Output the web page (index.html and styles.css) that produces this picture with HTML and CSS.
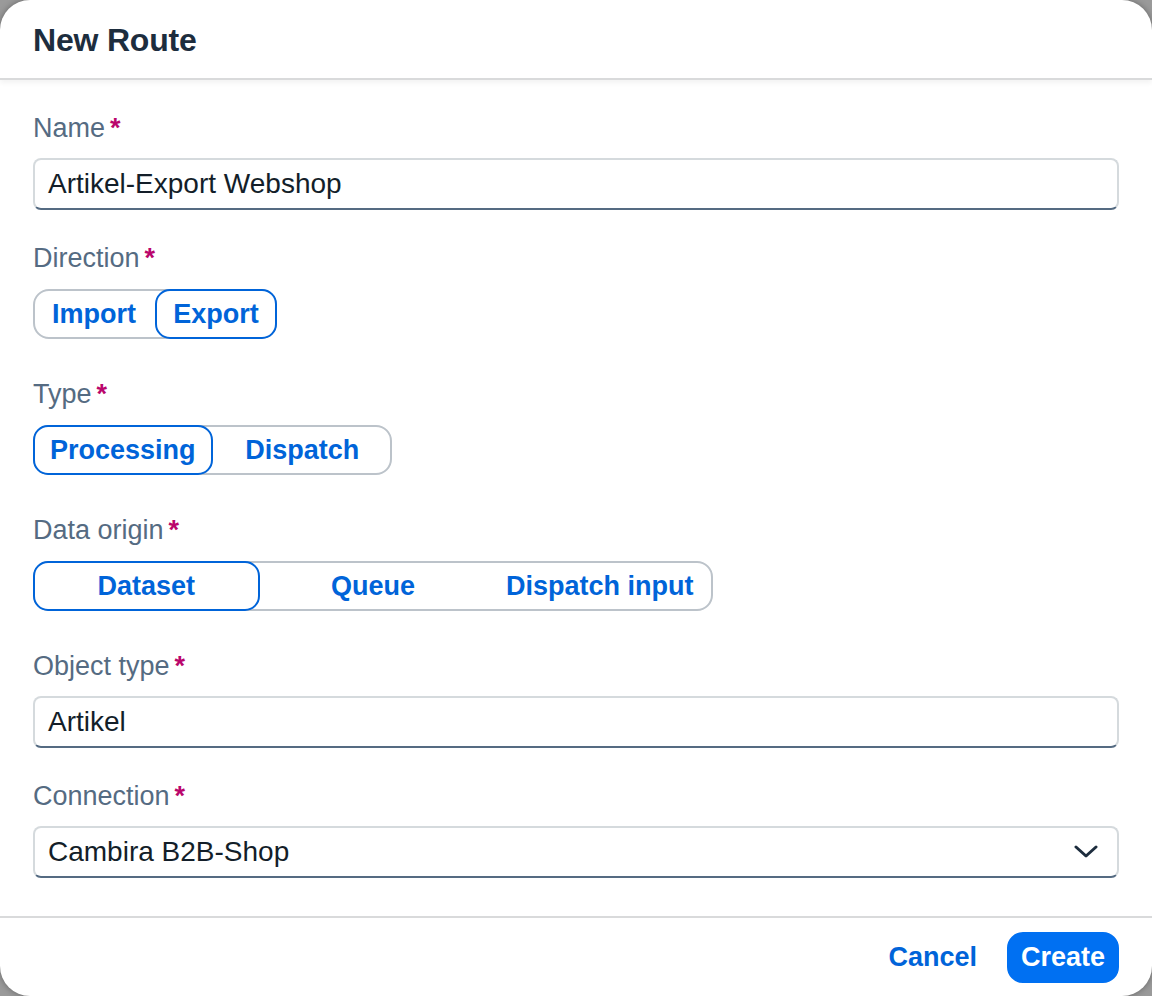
FILE: index.html
```html
<!DOCTYPE html>
<html lang="en">
<head>
<meta charset="utf-8">
<title>New Route</title>
<link rel="stylesheet" href="styles.css">
</head>
<body>
<div class="dialog">
  <header class="dialog-header">
    <h1 class="dialog-title">New Route</h1>
  </header>
  <main class="dialog-content">
    <div class="field">
      <label class="field-label">Name<span class="req">*</span></label>
      <div class="input"><span class="input-text">Artikel-Export Webshop</span></div>
    </div>
    <div class="field field-seg">
      <label class="field-label">Direction<span class="req">*</span></label>
      <div class="seg seg-direction">
        <button class="seg-item">Import</button>
        <button class="seg-item is-selected">Export</button>
      </div>
    </div>
    <div class="field field-seg">
      <label class="field-label">Type<span class="req">*</span></label>
      <div class="seg seg-type">
        <button class="seg-item is-selected">Processing</button>
        <button class="seg-item">Dispatch</button>
      </div>
    </div>
    <div class="field field-seg">
      <label class="field-label">Data origin<span class="req">*</span></label>
      <div class="seg seg-origin">
        <button class="seg-item is-selected">Dataset</button>
        <button class="seg-item">Queue</button>
        <button class="seg-item">Dispatch input</button>
      </div>
    </div>
    <div class="field">
      <label class="field-label">Object type<span class="req">*</span></label>
      <div class="input"><span class="input-text">Artikel</span></div>
    </div>
    <div class="field field-last">
      <label class="field-label">Connection<span class="req">*</span></label>
      <div class="input select">
        <span class="input-text">Cambira B2B-Shop</span>
        <svg class="chevron" width="24" height="14" viewBox="0 0 24 14" aria-hidden="true">
          <path d="M2 2 L12 11 L22 2" fill="none" stroke="#1d2d3e" stroke-width="3" stroke-linecap="round" stroke-linejoin="round"/>
        </svg>
      </div>
    </div>
  </main>
  <footer class="dialog-footer">
    <button class="btn btn-ghost">Cancel</button>
    <button class="btn btn-primary">Create</button>
  </footer>
</div>
</body>
</html>
```

FILE: styles.css
```css
* { box-sizing: border-box; }

html, body {
  margin: 0;
  padding: 0;
}

body {
  width: 1152px;
  height: 996px;
  background: #9a9a9a;
  font-family: "Liberation Sans", Arial, sans-serif;
  overflow: hidden;
}

.dialog {
  width: 1152px;
  height: 996px;
  background: #ffffff;
  border-radius: 30px;
  box-shadow: 0 0 6px rgba(0, 0, 0, 0.35);
  display: flex;
  flex-direction: column;
  overflow: hidden;
}

.dialog-header {
  height: 80px;
  flex: 0 0 80px;
  display: flex;
  align-items: center;
  padding: 2px 33px 0;
  border-bottom: 2px solid #d9dadb;
  box-shadow: 0 3px 5px rgba(0, 0, 0, 0.05);
  position: relative;
}

.dialog-title {
  margin: 0;
  font-size: 32px;
  font-weight: 700;
  color: #1d2d3e;
  letter-spacing: -0.2px;
}

.dialog-content {
  flex: 1 1 auto;
  padding: 32px 33px 38px;
  display: flex;
  flex-direction: column;
}

.field {
  display: flex;
  flex-direction: column;
  align-items: flex-start;
  margin-bottom: 32px;
}

.field-seg {
  margin-bottom: 39px;
}

.field-last {
  margin-bottom: 0;
}

.field-label {
  display: block;
  height: 32px;
  line-height: 32px;
  font-size: 27px;
  color: #556b82;
  margin-bottom: 14px;
}

.req {
  color: #ba066c;
  font-weight: 700;
  margin-left: 5px;
}

.input {
  width: 100%;
  height: 52px;
  border: 2px solid #d5dadd;
  border-bottom-color: #556b82;
  border-radius: 8px;
  background: #ffffff;
  display: flex;
  align-items: center;
  padding: 0 20px 0 13px;
}

.input-text {
  font-size: 28px;
  color: #131e29;
}

.select {
  justify-content: space-between;
}

.chevron {
  display: block;
  margin-right: -1px;
}

.seg {
  display: flex;
  height: 50px;
  margin-top: 1px;
  border: 2px solid #bcc3ca;
  border-radius: 16px;
  background: #ffffff;
}

.seg-direction { width: 244px; }
.seg-type { width: 359px; }
.seg-origin { width: 680px; }

.seg-item {
  flex: 1 1 0;
  margin: -2px 0;
  border: 2px solid transparent;
  border-radius: 15px;
  background: transparent;
  font-family: inherit;
  font-size: 27px;
  font-weight: 700;
  color: #0064d9;
  padding: 0 8px;
  white-space: nowrap;
  cursor: pointer;
}

.seg-item:first-child { margin-left: -2px; }
.seg-item:last-child { margin-right: -2px; }

.seg-item.is-selected {
  border-color: #0064d9;
  background: #ffffff;
}

.dialog-footer {
  flex: 0 0 80px;
  height: 80px;
  border-top: 2px solid #d9dadb;
  display: flex;
  justify-content: flex-end;
  align-items: center;
  padding: 0 33px 0;
  gap: 16px;
}

.btn {
  height: 51px;
  border-radius: 16px;
  font-family: inherit;
  font-size: 27px;
  font-weight: 700;
  padding: 0 12px;
  cursor: pointer;
}

.btn-ghost {
  background: transparent;
  border: 2px solid transparent;
  color: #0064d9;
}

.btn-primary {
  background: #0070f2;
  border: 2px solid #0070f2;
  color: #ffffff;
}
```
